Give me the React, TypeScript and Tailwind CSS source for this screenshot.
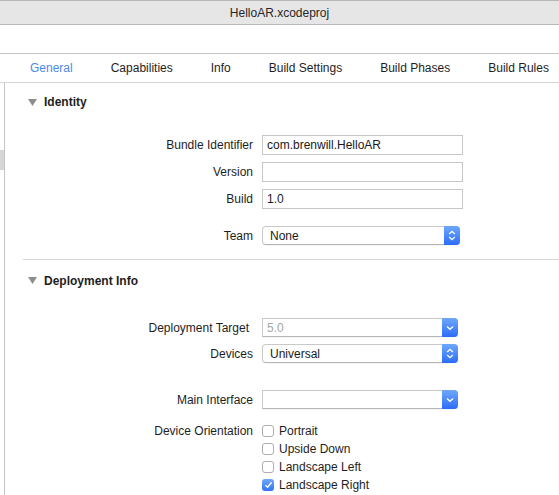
import React from "react";

const font = { fontFamily: '"Liberation Sans", Arial, sans-serif' };

function Triangle() {
  return (
    <svg width="9" height="7" viewBox="0 0 9 7" className="shrink-0">
      <path d="M0 0 H9 L4.5 7 Z" fill="#8e8e8e" />
    </svg>
  );
}

function Header({ title, extra = "h-[38px]" }: { title: string; extra?: string }) {
  return (
    <div className={"flex items-center pl-[23px] gap-[7px] " + extra}>
      <Triangle />
      <span className="font-bold text-[12px] text-[#1e1e1e]">{title}</span>
    </div>
  );
}

function Label({ children, extra = "" }: { children: React.ReactNode; extra?: string }) {
  return <div className={"w-[248px] text-right text-[12px] text-[#1e1e1e] shrink-0 " + extra}>{children}</div>;
}

function TextField({ value }: { value?: string }) {
  return (
    <div className="ml-[9px] w-[201px] h-[20px] border border-[#c6c6c6] bg-white flex items-center pl-[4px] text-[12px] text-[#1a1a1a]">
      {value}
    </div>
  );
}

function UpDown() {
  return (
    <svg width="8" height="11" viewBox="0 0 8 11">
      <path d="M1.2 4 L4 1.3 L6.8 4 M1.2 7 L4 9.7 L6.8 7" stroke="white" strokeWidth="1.3" fill="none" />
    </svg>
  );
}

function Down() {
  return (
    <svg width="8" height="6" viewBox="0 0 8 6">
      <path d="M1 1.5 L4 4.3 L7 1.5" stroke="white" strokeWidth="1.4" fill="none" />
    </svg>
  );
}

function Popup({ value, w, rounded, combo, gray }: { value?: string; w: string; rounded?: boolean; combo?: boolean; gray?: boolean }) {
  return (
    <div
      className={
        "ml-[9px] flex h-[19px] bg-white border border-[#c9c9c9] border-b-[#b4b4b4] shadow-[0_0.5px_0.5px_rgba(0,0,0,0.08)] " +
        w +
        (rounded ? " rounded-[4px]" : " rounded-r-[4px]")
      }
    >
      <div className={"flex-1 flex items-center text-[12px] " + (gray ? "text-[#a6a6a6] pl-[4px]" : "text-[#1a1a1a] pl-[7px]")}>{value}</div>
      <div className="w-[16px] -my-px -mr-px rounded-r-[4px] bg-gradient-to-b from-[#6ea8fc] to-[#2c6cf6] flex items-center justify-center">
        {combo ? <Down /> : <UpDown />}
      </div>
    </div>
  );
}

function Check({ checked, label }: { checked?: boolean; label: string }) {
  return (
    <div className="h-[18px] flex items-center">
      {checked ? (
        <div className="w-[12px] h-[12px] rounded-[3px] bg-gradient-to-b from-[#6ea8fc] to-[#3273f6] flex items-center justify-center">
          <svg width="9" height="8" viewBox="0 0 9 8">
            <path d="M1.5 4.2 L3.6 6.3 L7.6 1.2" stroke="white" strokeWidth="1.4" fill="none" />
          </svg>
        </div>
      ) : (
        <div className="w-[12px] h-[12px] rounded-[3px] border border-[#aeaeae] bg-white" />
      )}
      <span className="ml-[5px] text-[12px] text-[#1e1e1e]">{label}</span>
    </div>
  );
}

const tabs = ["General", "Capabilities", "Info", "Build Settings", "Build Phases", "Build Rules"];

export default function App() {
  return (
    <div className="w-[559px] h-[495px] bg-white overflow-hidden flex flex-col" style={font}>
      <div className="h-[25px] shrink-0 bg-[#e6e6e6] border-t border-t-[#b8b8b8] border-b border-b-[#b9b9b9] flex items-center justify-center text-[12px] text-[#262626]">
        HelloAR.xcodeproj
      </div>
      <div className="h-[29px] shrink-0 border-b border-[#c4c4c4]" />
      <div className="h-[29px] shrink-0 border-b border-[#d4d4d4] flex items-center pl-[30px] gap-[38px] text-[12px] text-[#1e1e1e]">
        {tabs.map((t, i) => (
          <span key={t} className={i === 0 ? "text-[#4a8ce6]" : ""}>
            {t}
          </span>
        ))}
      </div>
      <div className="flex-1 flex">
        <div className="w-[5px] shrink-0 border-r border-[#c4c4c4] pt-[67px]">
          <div className="w-[4px] h-[20px] bg-[#d6d6d6]" />
        </div>
        <div className="flex-1 flex flex-col">
          <Header title="Identity" />
          <div className="mt-[14px] flex flex-col gap-[7px]">
            <div className="flex items-center">
              <Label>Bundle Identifier</Label>
              <TextField value="com.brenwill.HelloAR" />
            </div>
            <div className="flex items-center">
              <Label>Version</Label>
              <TextField />
            </div>
            <div className="flex items-center">
              <Label>Build</Label>
              <TextField value="1.0" />
            </div>
          </div>
          <div className="mt-[17px] flex items-center">
            <Label>Team</Label>
            <Popup value="None" w="w-[198px]" rounded />
          </div>
          <div className="mt-[14px] ml-[18px] border-t border-[#d6d6d6]" />
          <Header title="Deployment Info" extra="h-[39px] pt-[2px]" />
          <div className="mt-[19px] flex flex-col gap-[7px]">
            <div className="flex items-center">
              <Label extra="pr-[4px]">Deployment Target</Label>
              <Popup value="5.0" w="w-[196px]" combo gray />
            </div>
            <div className="flex items-center">
              <Label>Devices</Label>
              <Popup value="Universal" w="w-[196px]" rounded />
            </div>
          </div>
          <div className="mt-[27px] flex items-center">
            <Label>Main Interface</Label>
            <Popup w="w-[196px]" combo />
          </div>
          <div className="mt-[13px] flex items-start">
            <Label extra="leading-[18px]">Device Orientation</Label>
            <div className="ml-[9px] flex flex-col">
              <Check label="Portrait" />
              <Check label="Upside Down" />
              <Check label="Landscape Left" />
              <Check label="Landscape Right" checked />
            </div>
          </div>
        </div>
      </div>
    </div>
  );
}
